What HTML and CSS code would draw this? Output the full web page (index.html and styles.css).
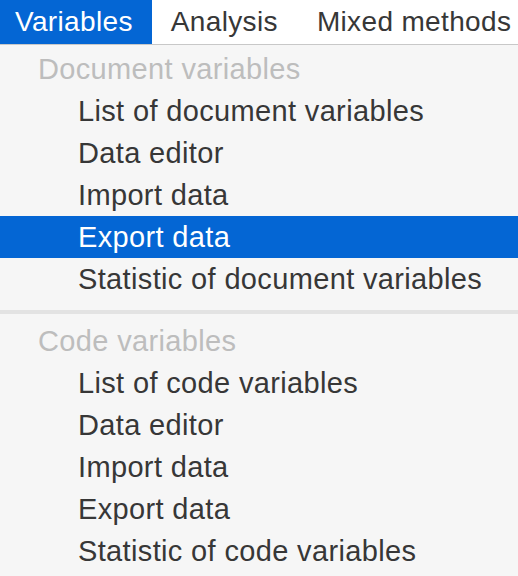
FILE: index.html
```html
<!DOCTYPE html>
<html>
<head>
<meta charset="utf-8">
<link rel="stylesheet" href="styles.css">
</head>
<body>
<div class="page">
  <nav class="menubar">
    <div class="title active">Variables</div>
    <div class="title">Analysis</div>
    <div class="title">Mixed methods</div>
  </nav>
  <div class="menu">
    <div class="group">
      <div class="label">Document variables</div>
      <div class="item">List of document variables</div>
      <div class="item">Data editor</div>
      <div class="item">Import data</div>
      <div class="item selected">Export data</div>
      <div class="item">Statistic of document variables</div>
    </div>
    <div class="separator"></div>
    <div class="group">
      <div class="label">Code variables</div>
      <div class="item">List of code variables</div>
      <div class="item">Data editor</div>
      <div class="item">Import data</div>
      <div class="item">Export data</div>
      <div class="item">Statistic of code variables</div>
    </div>
  </div>
</div>
</body>
</html>
```
FILE: styles.css
```css
html, body {
  margin: 0;
  padding: 0;
  background: #f6f6f6;
}
.page {
  width: 518px;
  height: 576px;
  overflow: hidden;
  font-family: "Liberation Sans", Arial, sans-serif;
  color: #373737;
  letter-spacing: 0.35px;
}
.menubar {
  display: flex;
  height: 44px;
  background: #ffffff;
  border-bottom: 1px solid #c8c8c8;
  white-space: nowrap;
  overflow: hidden;
}
.title {
  font-size: 28px;
  line-height: 44px;
  padding: 0 20px 0 19px;
  flex: none;
}
.title.active {
  background: #0466d4;
  color: #ffffff;
  padding: 0 19px 0 15px;
}
.menu {
  padding-top: 3px;
}
.label, .item {
  font-size: 29px;
  line-height: 42px;
  height: 42px;
  white-space: nowrap;
}
.label {
  padding-left: 38px;
  color: #bdbdbd;
}
.item {
  padding-left: 78px;
  color: #373737;
}
.item.selected {
  background: #0466d4;
  color: #ffffff;
}
.separator {
  height: 4px;
  background: #e3e3e3;
  margin: 10px 0 6px;
}
```
